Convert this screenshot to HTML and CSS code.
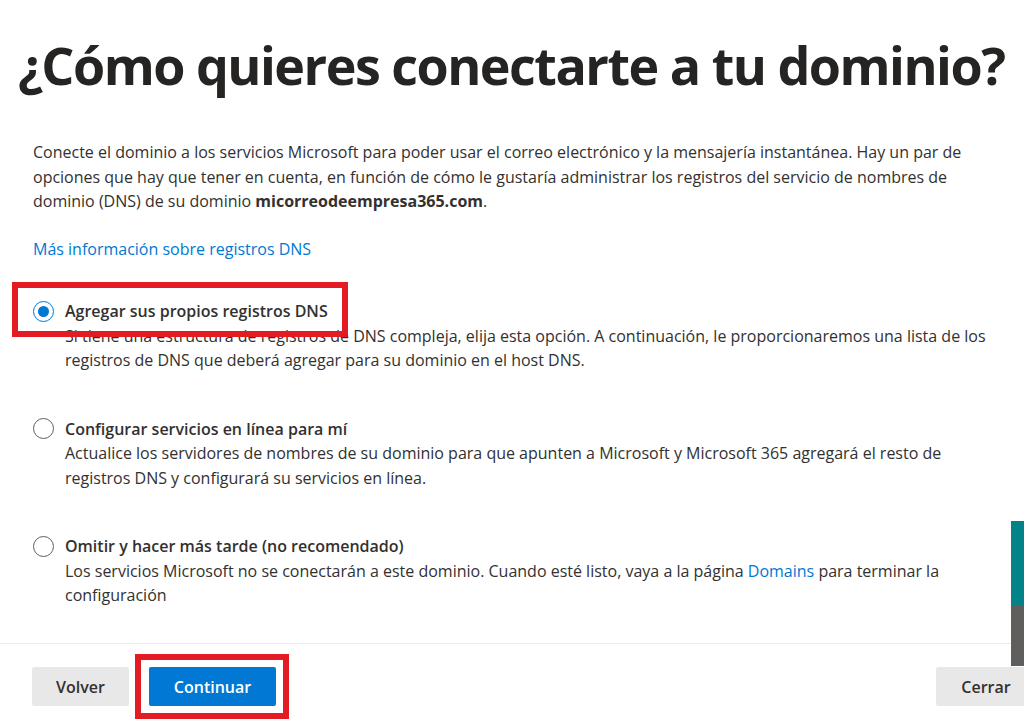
FILE: index.html
```html
<!DOCTYPE html>
<html>
<head>
  <meta charset="utf-8">
  <meta name="viewport" content="width=device-width, initial-scale=1">
  <title>Conectar dominio</title>
  <link rel="stylesheet" href="styles.css">
</head>
<body>
  <div class="panel">
    <div class="body-row">
      <main class="content">
        <h1 class="title">¿Cómo quieres conectarte a tu dominio?</h1>
        <p class="intro">Conecte el dominio a los servicios Microsoft para poder usar el correo electrónico y la mensajería instantánea. Hay un par de opciones que hay que tener en cuenta, en función de cómo le gustaría administrar los registros del servicio de nombres de dominio (DNS) de su dominio <b>micorreodeempresa365.com</b>.</p>
        <a class="link" href="#">Más información sobre registros DNS</a>

        <div class="options">
          <div class="option">
            <div class="option-head marked">
              <span class="radio checked"></span>
              <span class="option-title">Agregar sus propios registros DNS</span>
            </div>
            <p class="option-desc">Si tiene una estructura de registros de DNS compleja, elija esta opción. A continuación, le proporcionaremos una lista de los registros de DNS que deberá agregar para su dominio en el host DNS.</p>
          </div>
          <div class="option">
            <div class="option-head">
              <span class="radio"></span>
              <span class="option-title">Configurar servicios en línea para mí</span>
            </div>
            <p class="option-desc">Actualice los servidores de nombres de su dominio para que apunten a Microsoft y Microsoft 365 agregará el resto de registros DNS y configurará su servicios en línea.</p>
          </div>
          <div class="option">
            <div class="option-head">
              <span class="radio"></span>
              <span class="option-title">Omitir y hacer más tarde (no recomendado)</span>
            </div>
            <p class="option-desc">Los servicios Microsoft no se conectarán a este dominio. Cuando esté listo, vaya a la página <a class="link" href="#">Domains</a> para terminar la configuración</p>
          </div>
        </div>

        <div class="separator"></div>
      </main>
      <div class="scrollbar">
        <div class="thumb-teal"></div>
        <div class="thumb-grey"></div>
      </div>
    </div>

    <footer class="actions">
      <div class="left-actions">
        <button class="btn back">Volver</button>
        <button class="btn primary marked-btn">Continuar</button>
      </div>
      <button class="btn close">Cerrar</button>
    </footer>
  </div>
</body>
</html>
```

FILE: styles.css
```css
html, body {
  margin: 0;
  padding: 0;
  background-color: #FFFFFF;
  overflow: hidden;
}
body {
  color: #323130;
  font-family: 'Open Sans', 'Noto Sans', sans-serif;
  font-size: 16px;
}
.panel {
  width: 1024px;
  height: 720px;
  display: flex;
  flex-direction: column;
}
.body-row {
  display: flex;
  height: 666px;
}
.content {
  flex: 1;
  padding: 0 0 22px 33px;
  display: flex;
  flex-direction: column;
}
.title {
  margin: 34px 0 0 -15px;
  font-size: 52px;
  font-weight: 700;
  letter-spacing: -1.5px;
  line-height: 62px;
  color: #252423;
  white-space: nowrap;
}
.intro {
  margin: 44px 0 0 0;
  line-height: 24.5px;
  padding-right: 12px;
}
.intro b {
  font-weight: 700;
}
.link {
  color: #0078D4;
  text-decoration: none;
}
.content > .link {
  margin-top: 23px;
  line-height: 24.5px;
  align-self: flex-start;
}
.options {
  margin-top: 38px;
  display: flex;
  flex-direction: column;
  gap: 44px;
}
.option {
  display: flex;
  flex-direction: column;
}
.option-head {
  display: flex;
  align-items: center;
  gap: 11px;
  height: 24.5px;
  align-self: flex-start;
}
.option-title {
  font-weight: 600;
}
.option-desc {
  margin: 0 0 0 32px;
  line-height: 24.5px;
  padding-right: 4px;
}
.radio {
  width: 21px;
  height: 21px;
  border: 1.5px solid #605E5C;
  border-radius: 50%;
  box-sizing: border-box;
  display: flex;
  align-items: center;
  justify-content: center;
}
.radio.checked {
  border-color: #0078D4;
}
.radio.checked::after {
  content: '';
  width: 11px;
  height: 11px;
  border-radius: 50%;
  background-color: #0078D4;
}
.marked {
  position: relative;
}
.marked::before {
  content: '';
  position: absolute;
  left: -21px;
  right: -20px;
  top: -17px;
  bottom: -13px;
  border: 6px solid #E31B23;
}
.separator {
  margin-top: auto;
  height: 1px;
  margin-left: -33px;
  background-color: #EDEBE9;
}
.scrollbar {
  width: 13px;
  display: flex;
  flex-direction: column;
  justify-content: flex-end;
}
.thumb-teal {
  height: 84px;
  background-color: #038387;
}
.thumb-grey {
  height: 61px;
  background-color: #605E5C;
}
.actions {
  display: flex;
  justify-content: space-between;
  align-items: flex-start;
  padding: 1px 0 0 32px;
}
.left-actions {
  display: flex;
  gap: 20px;
}
.btn {
  height: 39px;
  padding: 0;
  border: none;
  border-radius: 2px;
  background-color: #E8E8E8;
  color: #323130;
  font-family: 'Open Sans', 'Noto Sans', sans-serif;
  font-size: 16px;
  font-weight: 600;
  cursor: pointer;
}
.btn.back {
  width: 97px;
}
.btn.primary {
  background-color: #0078D4;
  color: #FFFFFF;
  width: 127px;
}
.marked-btn {
  position: relative;
}
.marked-btn::after {
  content: '';
  position: absolute;
  left: -14px;
  right: -13px;
  top: -13px;
  bottom: -13px;
  border: 6px solid #E31B23;
}
.btn.close {
  width: 100px;
  margin-right: -12px;
}
```
